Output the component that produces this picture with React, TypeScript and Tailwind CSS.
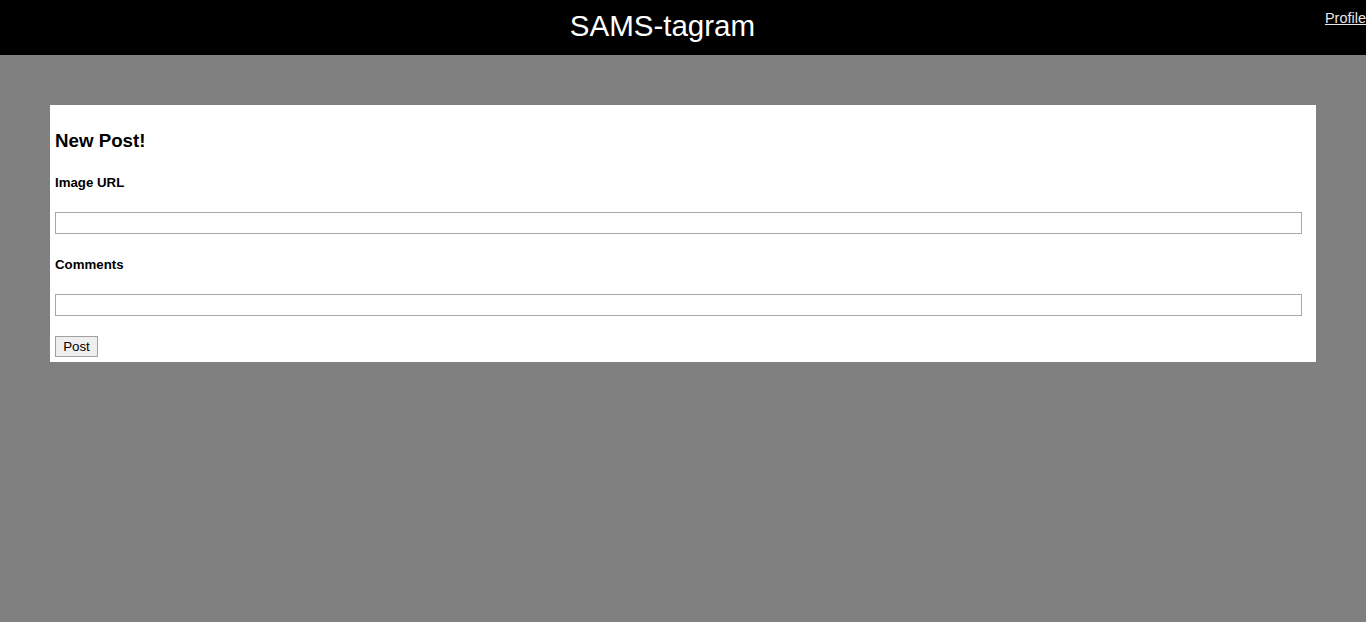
import React from "react";

export default function App() {
  return (
    <div className="min-h-[622px] bg-[#808080] font-['Liberation_Sans',Arial,sans-serif]">
      <header className="flex h-[55px] bg-black">
        <h1 className="flex-1 pt-[9px] text-center text-[29.5px] leading-[34px] text-white">SAMS-tagram</h1>
        <a href="#" className="pt-[10px] text-[14.5px] leading-[16px] text-[#e6e6e6] underline">Profile</a>
      </header>
      <main className="px-[50px] pt-[50px]">
        <div className="flex flex-col items-start bg-white px-[5px] pb-[5px]">
          <h3 className="mt-[25px] text-[18.72px] font-bold leading-[22px] text-black">New Post!</h3>
          <h5 className="mt-[23px] text-[13.28px] font-bold leading-[15px] text-black">Image URL</h5>
          <input type="text" className="mt-[22px] h-[22px] w-[1247px] border border-[#a9a9a9] bg-white" />
          <h5 className="mt-[23px] text-[13.28px] font-bold leading-[15px] text-black">Comments</h5>
          <input type="text" className="mt-[22px] h-[22px] w-[1247px] border border-[#a9a9a9] bg-white" />
          <button className="mt-[20px] h-[21px] w-[43px] border border-[#a0a0a0] bg-[#efefef] text-[13.33px] leading-[15px] text-black">Post</button>
        </div>
      </main>
    </div>
  );
}
